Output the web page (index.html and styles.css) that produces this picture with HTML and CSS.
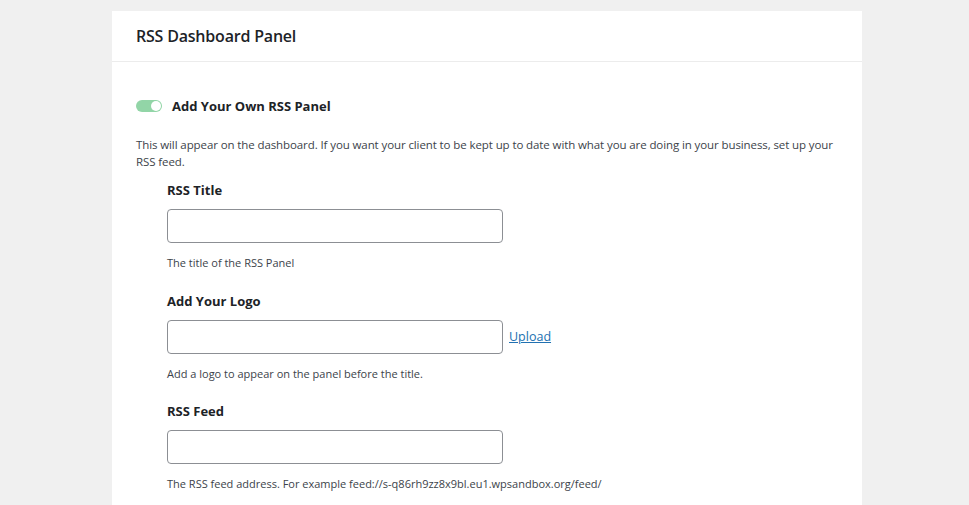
FILE: index.html
```html
<!DOCTYPE html>
<html>
<head>
<meta charset="utf-8">
<link rel="stylesheet" href="styles.css">
</head>
<body>
<div class="panel">
  <div class="panel-head"><h2 class="panel-title">RSS Dashboard Panel</h2></div>
  <div class="panel-body">
    <div class="toggle-row">
      <span class="toggle"><span class="knob"></span></span>
      <span class="toggle-label">Add Your Own RSS Panel</span>
    </div>
    <p class="desc">This will appear on the dashboard. If you want your client to be kept up to date with what you are doing in your business, set up your RSS feed.</p>
    <div class="fields">
      <div class="field">
        <div class="label">RSS Title</div>
        <div class="input-row"><span class="input"></span></div>
        <div class="help">The title of the RSS Panel</div>
      </div>
      <div class="field">
        <div class="label">Add Your Logo</div>
        <div class="input-row"><span class="input"></span><a class="upload" href="#">Upload</a></div>
        <div class="help">Add a logo to appear on the panel before the title.</div>
      </div>
      <div class="field">
        <div class="label">RSS Feed</div>
        <div class="input-row"><span class="input"></span></div>
        <div class="help">The RSS feed address. For example feed://s-q86rh9zz8x9bl.eu1.wpsandbox.org/feed/</div>
      </div>
    </div>
  </div>
</div>
</body>
</html>
```
FILE: styles.css
```css
* { box-sizing: border-box; }
html, body { margin: 0; padding: 0; }
body {
  background: #f0f0f0;
  font-family: "Open Sans", "Noto Sans", sans-serif;
  color: #3c434a;
  height: 505px;
  overflow: hidden;
}
.panel {
  margin: 11px 0 0 112px;
  width: 750px;
  background: #fff;
  min-height: 494px;
}
.panel-head {
  height: 51px;
  border-bottom: 1px solid #ececec;
  padding: 0 24px;
  display: flex;
  align-items: center;
}
.panel-title {
  margin: 0;
  font-size: 16px;
  font-weight: 600;
  color: #1d2327;
  letter-spacing: -0.2px;
}
.panel-body {
  padding: 34px 24px 0 24px;
}
.toggle-row {
  display: flex;
  align-items: center;
  height: 20px;
}
.toggle {
  width: 26px;
  height: 12px;
  border-radius: 6px;
  background: #92d5a7;
  position: relative;
  display: inline-block;
}
.knob {
  position: absolute;
  right: 1px;
  top: 1px;
  width: 10px;
  height: 10px;
  border-radius: 50%;
  background: #fff;
}
.toggle-label {
  margin-left: 10px;
  font-size: 13px;
  font-weight: 700;
  color: #1d2327;
}
.desc {
  margin: 20px 0 0 0;
  font-size: 11.5px;
  line-height: 17px;
  letter-spacing: -0.1px;
  color: #3c434a;
}
.fields {
  padding-left: 31px;
  margin-top: 10px;
}
.field { margin-bottom: 19.5px; }
.label {
  font-size: 13px;
  font-weight: 700;
  line-height: 20px;
  color: #1d2327;
}
.input-row {
  display: flex;
  align-items: center;
  margin-top: 9px;
}
.input {
  display: block;
  width: 336px;
  height: 34px;
  border: 1px solid #8c8f94;
  border-radius: 4px;
  background: #fff;
}
.upload {
  margin-left: 6px;
  font-size: 12.5px;
  color: #2271b1;
  text-decoration: underline;
}
.help {
  margin-top: 11px;
  font-size: 11px;
  line-height: 17px;
  color: #3c434a;
}
```
